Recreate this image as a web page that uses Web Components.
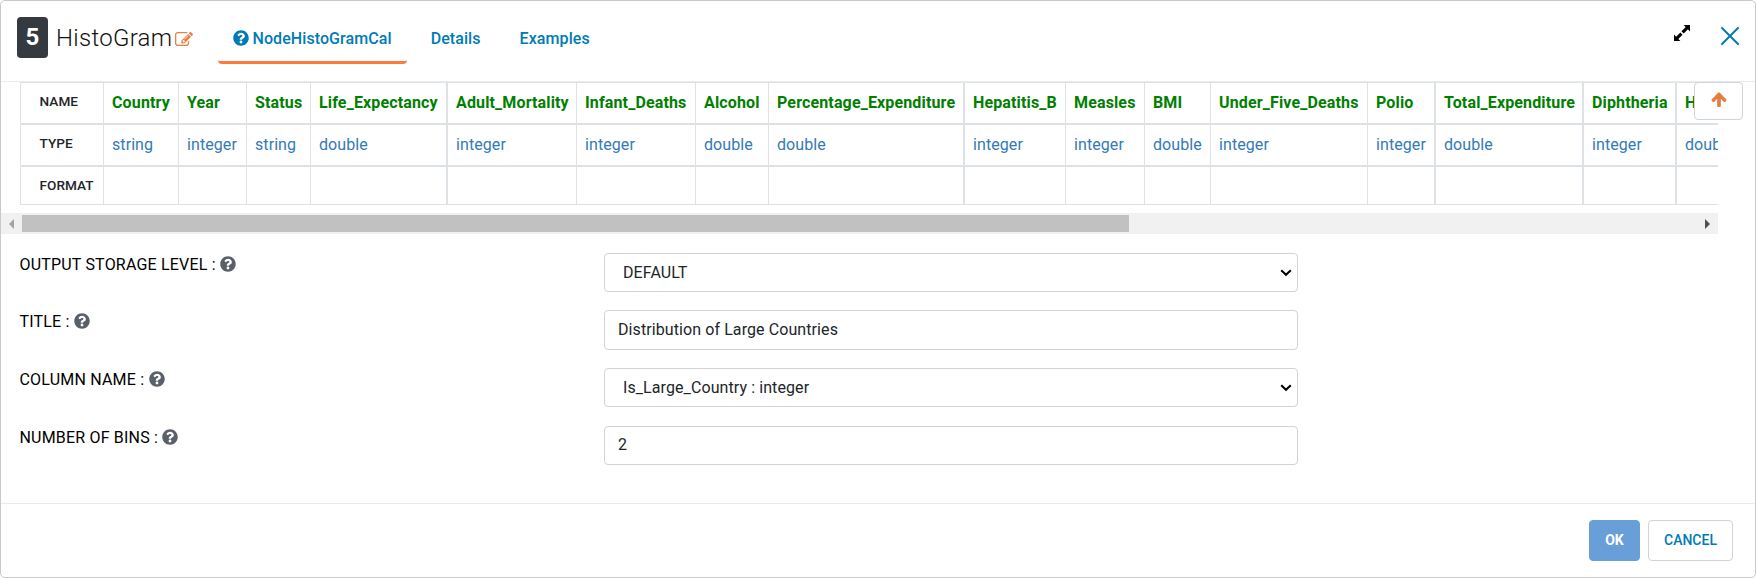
<!DOCTYPE html>
<html lang="en">
<head>
<meta charset="utf-8">
<title>HistoGram</title>
<style>
html,body{margin:0;height:100%;background:#fff;overflow:hidden}
body{font:400 16px/24px Roboto,sans-serif;color:#212529}
</style>
</head>
<body>
<node-dialog></node-dialog>
<script>
const define = (name, html, setup) => customElements.define(name, class extends HTMLElement {
  connectedCallback() {
    if (this.shadowRoot) return;
    const t = document.createElement('template');
    t.innerHTML = typeof html === 'function' ? html(this) : html;
    this.attachShadow({mode: 'open'}).append(t.content.cloneNode(true));
    if (setup) setup(this);
  }
});

const ICONS = {
  question: ['0 0 512 512', '<path d="M504 256c0 136.997-111.043 248-248 248S8 392.997 8 256C8 119.083 119.043 8 256 8s248 111.083 248 248zM262.655 90c-54.497 0-89.255 22.957-116.549 63.758-3.536 5.286-2.353 12.415 2.715 16.258l34.699 26.31c5.205 3.947 12.621 3.008 16.665-2.122 17.864-22.658 30.113-35.797 57.303-35.797 20.429 0 45.698 13.148 45.698 32.958 0 14.976-12.363 22.667-32.534 33.976C247.128 238.528 216 254.941 216 296v4c0 6.627 5.373 12 12 12h56c6.627 0 12-5.373 12-12v-1.333c0-28.462 83.186-29.647 83.186-106.667 0-58.002-60.165-102-116.531-102zM256 338c-25.365 0-46 20.635-46 46 0 25.364 20.635 46 46 46s46-20.636 46-46c0-25.365-20.635-46-46-46z"/>'],
  edit: ['0 128 1792 1408', '<path d="M888 1184l116-116-152-152-116 116v56h96v96h56zm440-720q-16-16-33 1l-350 350q-17 17-1 33t33-1l350-350q17-17 1-33zm80 594v190q0 119-84.5 203.5t-203.5 84.5h-832q-119 0-203.5-84.5t-84.5-203.5v-832q0-119 84.5-203.5t203.5-84.5h832q63 0 117 25 15 7 18 23 3 17-9 29l-49 49q-14 14-32 8-23-6-45-6h-832q-66 0-113 47t-47 113v832q0 66 47 113t113 47h832q66 0 113-47t47-113v-126q0-13 9-22l64-64q15-15 35-7t20 29zm-96-738l288 288-672 672h-288v-288zm444 132l-92 92-288-288 92-92q28-28 68-28t68 28l152 152q28 28 28 68t-28 68z"/>'],
  up: ['64 160 1664 1504', '<path d="M1675 971q0 51-37 90l-75 75q-38 38-91 38-54 0-90-38l-294-293v704q0 52-37.5 84.5t-90.5 32.5h-128q-53 0-90.5-32.5t-37.5-84.5v-704l-294 293q-36 38-90 38t-90-38l-75-75q-38-38-38-90 0-53 38-91l651-651q35-37 90-37 54 0 91 37l651 651q37 39 37 91z"/>'],
  expand: ['0 0 16 16', '<path d="M9.6 0H16V6.4L13.9 4.3 9.7 8.5 7.5 6.3 11.7 2.1ZM6.4 16H0V9.6L2.1 11.7 6.3 7.5 8.5 9.7 4.3 13.9Z"/>'],
  close: ['0 0 18 18', '<path d="M1 1L17 17M17 1L1 17" fill="none" stroke="currentColor" stroke-width="2" stroke-linecap="round"/>'],
  chevron: ['0 0 12 8', '<path d="M1.2 1.2L6 5.8 10.8 1.2" fill="none" stroke="currentColor" stroke-width="2.1"/>'],
  left: ['0 0 5 10', '<path d="M5 0V10L0 5Z"/>'],
  right: ['0 0 5 10', '<path d="M0 0V10L5 5Z"/>']
};
define('ui-icon', el => {
  const [box, body] = ICONS[el.getAttribute('name')];
  return `<style>:host{display:inline-block;flex:none}svg{display:block;width:100%;height:100%;fill:currentColor}</style>
  <svg viewBox="${box}" preserveAspectRatio="none" aria-hidden="true">${body}</svg>`;
});

define('dialog-tab', `<style>
:host{display:flex;align-items:center;box-sizing:border-box;height:47px;padding:0 15.5px 0 15px;color:#007bb5;font-weight:500;letter-spacing:.08px;border-bottom:3px solid transparent;border-radius:4px;white-space:nowrap}
:host([active]){border-bottom-color:#fa7d3c}
</style><slot></slot>`);

define('dialog-header', `<style>
:host{display:flex;box-sizing:border-box;height:81px;padding:16px 16px 0 16px;border-bottom:1px solid #e9ecef}
.badge{width:31px;height:41px;border-radius:4px;background:#343a40;color:#fff;font:700 24px/41px Roboto,sans-serif;text-align:center}
.title{margin-left:8px;width:117px;font-weight:300;font-size:24px;line-height:42px;letter-spacing:.3px;color:#111;white-space:nowrap}
.edit{width:18px;height:14px;margin-top:15px;margin-left:2px;color:#e97e43}
nav{display:flex;margin-left:25px;margin-top:0;gap:8.5px}
.q{width:16px;height:16px;margin:-3px 4px 0 -.5px}
.expand{margin:8px 31px 0 auto;width:16px;height:16px;color:#000}
.close{margin-top:10px;width:18px;height:18px;color:#007bb5}
</style>
<div class="badge">5</div><div class="title">HistoGram</div><ui-icon class="edit" name="edit"></ui-icon>
<nav><dialog-tab active><ui-icon class="q" name="question"></ui-icon>NodeHistoGramCal</dialog-tab><dialog-tab>Details</dialog-tab><dialog-tab>Examples</dialog-tab></nav>
<ui-icon class="expand" name="expand"></ui-icon><ui-icon class="close" name="close"></ui-icon>`);

// name, type, column width, left border width
const COLUMNS = [
  ['Country','string',75,1],['Year','integer',68,1],['Status','string',64,1],['Life_Expectancy','double',136,1],
  ['Adult_Mortality','integer',130,2],['Infant_Deaths','integer',119,1],['Alcohol','double',73,1],['Percentage_Expenditure','double',195,1],
  ['Hepatitis_B','integer',102,2],['Measles','integer',79,1],['BMI','double',66,1],['Under_Five_Deaths','integer',157,1],
  ['Polio','integer',67,1],['Total_Expenditure','double',148,2],['Diphtheria','integer',93,2],['HIV_AIDS','double',90,2]
];
define('schema-table', () => {
  const row = (cls, label, pick) => `<div class="row ${cls}"><b>${label}</b>${COLUMNS.map(c => `<span style="border-left-width:${c[3]}px">${pick(c)}</span>`).join('')}</div>`;
  return `<style>
:host{display:block;overflow:hidden;height:123px;padding-left:19px;margin-right:37px}
.row{display:grid;grid-template-columns:83px ${COLUMNS.map(c => c[2] + 'px').join(' ')};width:max-content;box-sizing:border-box;height:42px;border-bottom:2px solid #dee2e6}
.row b,.row span{border-left:1px solid #dee2e6;padding:8px 0 0 8px;white-space:nowrap;box-sizing:border-box}
.row b{padding-left:18.5px;font-weight:500;font-size:13.6px;line-height:20.4px;letter-spacing:.05px}
.name{height:43px;border-top:1px solid #dee2e6}
.name span{font-weight:700;color:#008000;letter-spacing:.14px}
.type span{color:#337ab7;letter-spacing:.08px}
.format{height:38px;border-bottom-width:1px}
</style>` + row('name','NAME',c=>c[0]) + row('type','TYPE',c=>c[1]) + row('format','FORMAT',()=>'');
});

define('scroll-track', `<style>
:host{display:flex;align-items:center;box-sizing:border-box;height:21px;margin:8px 37px 0 0;padding:0 8px;background:#f1f1f1;color:#505050}
.thumb{width:1107px;height:17px;background:#c1c1c1;margin-left:8px}
ui-icon{width:5px;height:10px}.l{color:#a3a3a3}.r{margin-left:auto}
</style><ui-icon class="l" name="left"></ui-icon><div class="thumb"></div><ui-icon class="r" name="right"></ui-icon>`);

define('form-row', `<style>
:host{display:grid;grid-template-columns:584.5px 694px;align-items:start}
label{display:flex;align-items:center;color:#000;height:24px;white-space:nowrap;letter-spacing:.19px}
ui-icon{width:16px;height:16px;margin-left:4.3px;margin-top:-2px;color:#5a6069}
</style><label><slot name="label"></slot><ui-icon name="question"></ui-icon></label><slot></slot>`);

define('form-field', `<style>
:host{display:flex;align-items:center;justify-content:space-between;box-sizing:border-box;height:39px;border:1px solid #ced4da;border-radius:4px;padding:0 5px 0 13px;color:#212529;letter-spacing:.09px;white-space:nowrap}
:host([tall]){height:40px}
:host([select]){padding-left:18px}
:host([raised]){padding-bottom:1px}
ui-icon{display:none;width:12px;height:8px;color:#000}
:host([select]) ui-icon{display:block}
</style><slot></slot><ui-icon name="chevron"></ui-icon>`);

define('ui-button', `<style>
:host{display:flex;align-items:center;justify-content:center;box-sizing:border-box;height:41px;border:1px solid #ced4da;border-radius:4px;background:#fff;color:#007bb5;font-weight:500;font-size:14px;padding-bottom:1px}
:host([primary]){background:#699fd9;border-color:#699fd9;color:#fff;font-weight:700}
</style><slot></slot>`);

define('node-dialog', `<style>
:host{display:flex;flex-direction:column;position:relative;box-sizing:border-box;width:1756px;height:578px;border:1px solid #c9c9c9;border-radius:5px;background:#fff;overflow:hidden}
form{display:grid;grid-template-rows:57px 58px 58px 58px;padding:19px 0 0 18.5px}
.foot{display:flex;justify-content:flex-end;gap:8px;box-sizing:border-box;margin-top:auto;height:74px;border-top:1px solid #e9ecef;padding:16px 22px 0}
.ok{width:51px}.cancel{width:85px}
.top{position:absolute;left:1693px;top:81px;width:49px;height:38px}
.top ui-icon{width:16px;height:15px;color:#e37d40;margin-top:-2px}
</style>
<dialog-header></dialog-header>
<schema-table></schema-table>
<scroll-track></scroll-track>
<form>
<form-row><span slot="label">OUTPUT STORAGE LEVEL :</span><form-field select>DEFAULT</form-field></form-row>
<form-row><span slot="label">TITLE :</span><form-field tall>Distribution of Large Countries</form-field></form-row>
<form-row><span slot="label">COLUMN NAME :</span><form-field select>Is_Large_Country : integer</form-field></form-row>
<form-row><span slot="label">NUMBER OF BINS :</span><form-field raised>2</form-field></form-row>
</form>
<div class="foot"><ui-button class="ok" primary>OK</ui-button><ui-button class="cancel">CANCEL</ui-button></div>
<ui-button class="top"><ui-icon name="up"></ui-icon></ui-button>`);
</script>
</body>
</html>
